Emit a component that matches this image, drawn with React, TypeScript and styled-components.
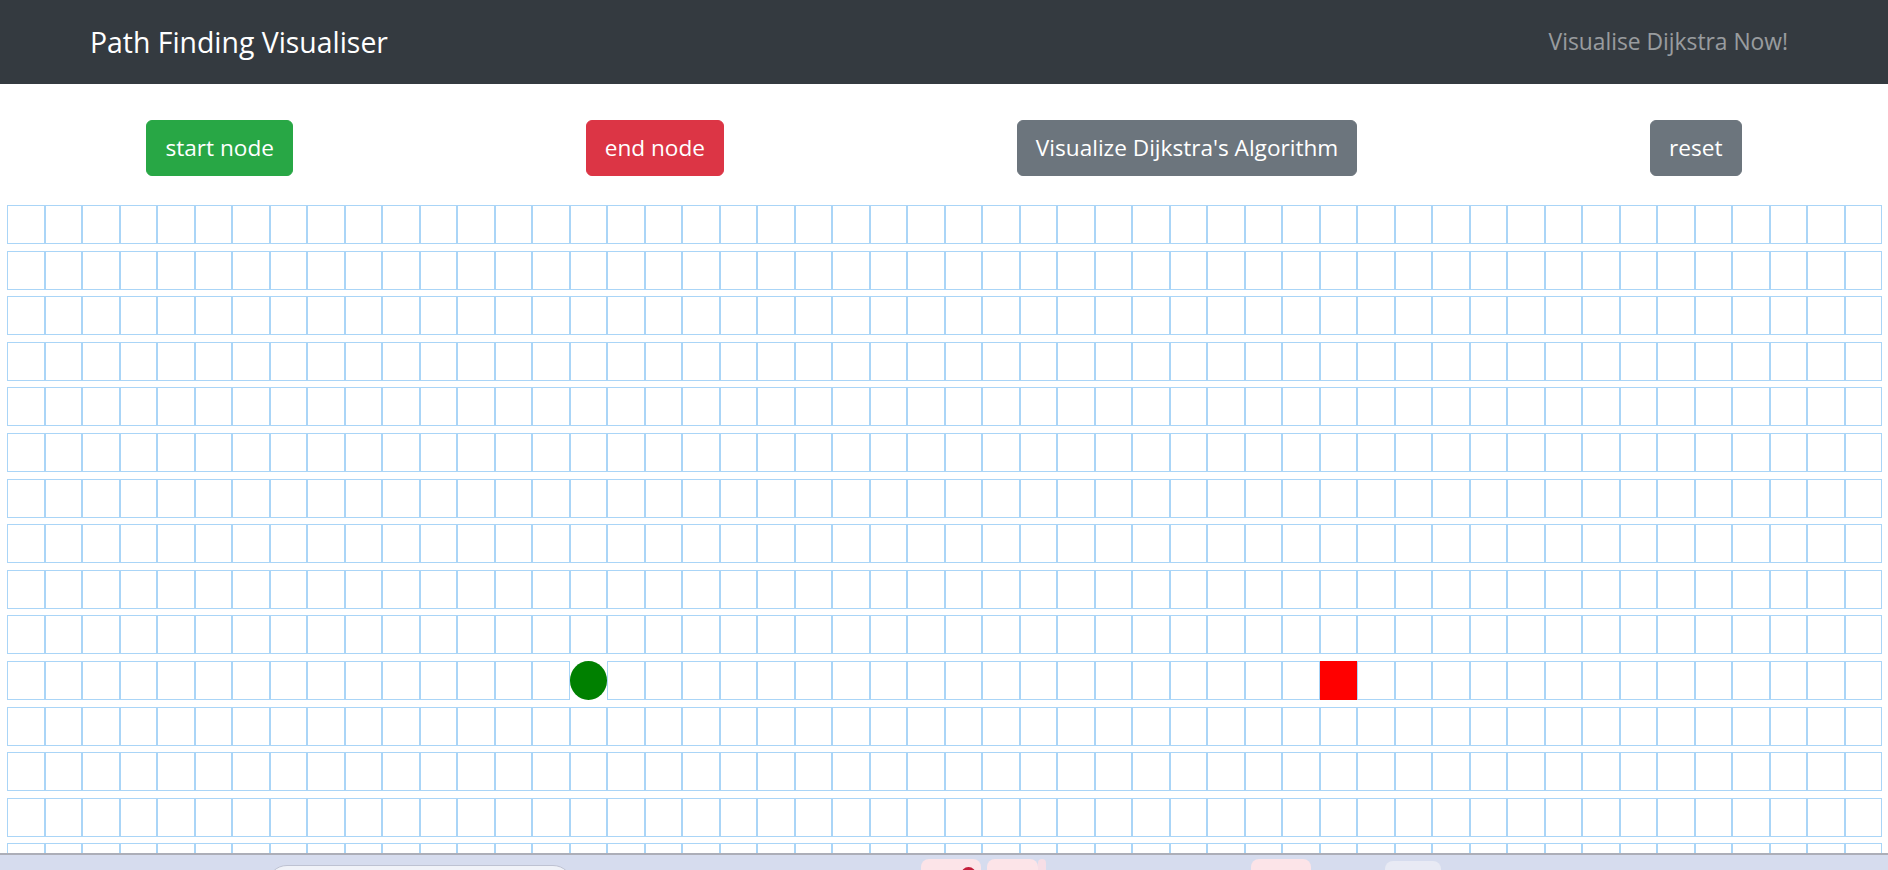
import React from "react";
import styled, { createGlobalStyle, css } from "styled-components";

const ROWS = 20;
const COLS = 50;
const START = { row: 10, col: 15 };
const END = { row: 10, col: 35 };

const GlobalStyle = createGlobalStyle`
  html, body {
    margin: 0;
    padding: 0;
    overflow: hidden;
    background: #ffffff;
    font-family: "Open Sans", "Noto Sans", "Liberation Sans", sans-serif;
  }
  * { box-sizing: border-box; }
`;

const Page = styled.div`
  width: 1888px;
  min-height: 870px;
`;

const Navbar = styled.nav`
  height: 84px;
  background: #343a40;
`;

const NavContainer = styled.div`
  width: 1710px;
  height: 100%;
  margin: 0 auto;
  display: flex;
  align-items: center;
  justify-content: space-between;
`;

const Brand = styled.a`
  font-size: 28.4px;
  line-height: 45px;
  color: #ffffff;
  padding-left: 1px;
  text-decoration: none;
  white-space: nowrap;
`;

const NavLink = styled.a`
  font-size: 22.8px;
  line-height: 36px;
  color: rgba(255, 255, 255, 0.5);
  padding-right: 11px;
  text-decoration: none;
  white-space: nowrap;
`;

const ButtonBar = styled.div`
  margin-top: 36px;
  display: flex;
  justify-content: space-around;
  align-items: center;
`;

type Variant = "success" | "danger" | "secondary";

const variantColors: Record<Variant, string> = {
  success: "#28a745",
  danger: "#dc3545",
  secondary: "#6c757d",
};

const Button = styled.button<{ $variant: Variant }>`
  font-family: inherit;
  font-size: 22.6px;
  line-height: 36px;
  padding: 9px 18px;
  border-radius: 6px;
  color: #ffffff;
  white-space: nowrap;
  cursor: pointer;
  ${({ $variant }) => css`
    background: ${variantColors[$variant]};
    border: 1px solid ${variantColors[$variant]};
  `}
`;

const Grid = styled.div`
  margin-top: 29px;
  padding-left: 7px;
  display: flex;
  flex-direction: column;
  gap: 6.6px;
`;

const GridRow = styled.div`
  display: flex;
`;

type CellKind = "plain" | "start" | "end";

const Cell = styled.div<{ $kind: CellKind }>`
  flex: 0 0 37.5px;
  width: 37.5px;
  height: 39px;
  border: 1px solid rgb(170, 213, 247);
  background: #ffffff;
  ${({ $kind }) =>
    $kind === "start" &&
    css`
      border-color: transparent;
      background: #008000;
      border-radius: 50%;
    `}
  ${({ $kind }) =>
    $kind === "end" &&
    css`
      border-color: #ff0000;
      background: #ff0000;
    `}
`;

const Taskbar = styled.div`
  position: fixed;
  left: 0;
  right: 0;
  bottom: 0;
  height: 17px;
  overflow: hidden;
  background: rgb(214, 220, 238);
  border-top: 2px solid rgb(172, 174, 184);
  display: flex;
  align-items: flex-start;
`;

const TaskItem = styled.div<{ $w: number; $top: number; $ml: number; $bg: string; $border?: string }>`
  position: relative;
  flex: 0 0 auto;
  width: ${({ $w }) => $w}px;
  height: 40px;
  margin-top: ${({ $top }) => $top}px;
  margin-left: ${({ $ml }) => $ml}px;
  background: ${({ $bg }) => $bg};
  border-radius: 8px;
  border: ${({ $border }) => $border ?? "none"};
`;

const SearchBox = styled(TaskItem)`
  border-radius: 20px;
`;

const RedDot = styled.div`
  position: absolute;
  left: 40px;
  top: 8px;
  width: 15px;
  height: 15px;
  border-radius: 50%;
  background: rgb(196, 30, 58);
`;

export default function App() {
  const rows = Array.from({ length: ROWS }, (_, r) => r);
  const cols = Array.from({ length: COLS }, (_, c) => c);
  const kindOf = (r: number, c: number): CellKind =>
    r === START.row && c === START.col ? "start" : r === END.row && c === END.col ? "end" : "plain";

  return (
    <Page>
      <GlobalStyle />
      <Navbar>
        <NavContainer>
          <Brand href="#">Path Finding Visualiser</Brand>
          <NavLink href="#">Visualise Dijkstra Now!</NavLink>
        </NavContainer>
      </Navbar>
      <ButtonBar>
        <Button $variant="success">start node</Button>
        <Button $variant="danger">end node</Button>
        <Button $variant="secondary">Visualize Dijkstra's Algorithm</Button>
        <Button $variant="secondary">reset</Button>
      </ButtonBar>
      <Grid>
        {rows.map((r) => (
          <GridRow key={r}>
            {cols.map((c) => (
              <Cell key={c} $kind={kindOf(r, c)} />
            ))}
          </GridRow>
        ))}
      </Grid>
      <Taskbar>
        <SearchBox $w={306} $top={10} $ml={267} $bg="rgb(240, 242, 248)" $border="1px solid rgb(190, 194, 210)" />
        <TaskItem $w={60} $top={4} $ml={348} $bg="rgb(252, 228, 232)">
          <RedDot />
        </TaskItem>
        <TaskItem $w={51} $top={4} $ml={6} $bg="rgb(252, 228, 232)" />
        <TaskItem $w={8} $top={4} $ml={0} $bg="rgb(246, 222, 230)" />
        <TaskItem $w={60} $top={4} $ml={205} $bg="rgb(252, 228, 232)" />
        <TaskItem $w={56} $top={6} $ml={74} $bg="rgb(232, 234, 244)" />
      </Taskbar>
    </Page>
  );
}
